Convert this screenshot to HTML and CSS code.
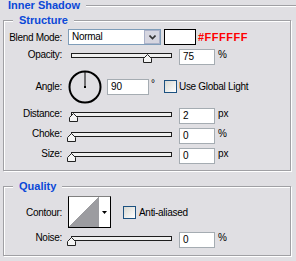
FILE: index.html
```html
<!DOCTYPE html>
<html>
<head>
<meta charset="utf-8">
<link rel="stylesheet" href="styles.css">
</head>
<body>
<div class="panel">
  <div class="head"><span class="title">Inner Shadow</span><span class="rule"></span></div>

  <fieldset class="group structure">
    <legend class="legend">Structure</legend>
    <div class="rows">
      <div class="row">
        <span class="lbl">Blend Mode:</span>
        <div class="select">
          <span class="select-text">Normal</span>
          <span class="select-btn"><svg class="chev" width="7" height="5" viewBox="0 0 7 5"><polyline points="0.5,0.5 3.5,3.5 6.5,0.5" fill="none" stroke="#333" stroke-width="1.6"/></svg></span>
        </div>
        <span class="swatch"></span>
        <span class="hex">#FFFFFF</span>
      </div>

      <div class="row row-slider">
        <span class="lbl">Opacity:</span>
        <div class="slider">
          <div class="track"></div>
          <svg class="thumb" style="left:75px" width="9" height="9" viewBox="0 0 9 9"><polygon points="4.5,0.5 8.5,4.5 8.5,8.5 0.5,8.5 0.5,4.5" fill="#f4f4f4" stroke="#222" stroke-width="1"/></svg>
        </div>
        <span class="field">75</span>
        <span class="unit">%</span>
      </div>

      <div class="row row-angle">
        <span class="lbl">Angle:</span>
        <svg class="dial" width="34" height="34" viewBox="0 0 34 34">
          <circle cx="17" cy="17" r="15.5" fill="none" stroke="#000" stroke-width="2"/>
          <line x1="17" y1="2" x2="17" y2="17" stroke="#000" stroke-width="1"/>
          <rect x="16" y="16" width="2" height="2" fill="#000"/>
        </svg>
        <span class="field field-wide">90</span>
        <span class="unit unit-deg">°</span>
        <span class="check"></span>
        <span class="check-text">Use Global Light</span>
      </div>

      <div class="row row-slider">
        <span class="lbl">Distance:</span>
        <div class="slider">
          <div class="track"></div>
          <svg class="thumb" style="left:1px" width="9" height="9" viewBox="0 0 9 9"><polygon points="4.5,0.5 8.5,4.5 8.5,8.5 0.5,8.5 0.5,4.5" fill="#f4f4f4" stroke="#222" stroke-width="1"/></svg>
        </div>
        <span class="field">2</span>
        <span class="unit">px</span>
      </div>

      <div class="row row-slider">
        <span class="lbl">Choke:</span>
        <div class="slider">
          <div class="track"></div>
          <svg class="thumb" style="left:-1px" width="9" height="9" viewBox="0 0 9 9"><polygon points="4.5,0.5 8.5,4.5 8.5,8.5 0.5,8.5 0.5,4.5" fill="#f4f4f4" stroke="#222" stroke-width="1"/></svg>
        </div>
        <span class="field">0</span>
        <span class="unit">%</span>
      </div>

      <div class="row row-slider">
        <span class="lbl">Size:</span>
        <div class="slider">
          <div class="track"></div>
          <svg class="thumb" style="left:-1px" width="9" height="9" viewBox="0 0 9 9"><polygon points="4.5,0.5 8.5,4.5 8.5,8.5 0.5,8.5 0.5,4.5" fill="#f4f4f4" stroke="#222" stroke-width="1"/></svg>
        </div>
        <span class="field">0</span>
        <span class="unit">px</span>
      </div>
    </div>
  </fieldset>

  <fieldset class="group quality">
    <legend class="legend">Quality</legend>
    <div class="rows">
      <div class="row row-contour">
        <span class="lbl">Contour:</span>
        <div class="contour">
          <span class="contour-preview"></span>
          <span class="contour-drop"><svg width="5" height="3" viewBox="0 0 5 3"><polygon points="0,0 5,0 2.5,3" fill="#000"/></svg></span>
        </div>
        <span class="check check-aa"></span>
        <span class="check-text check-text-aa">Anti-aliased</span>
      </div>

      <div class="row row-slider">
        <span class="lbl">Noise:</span>
        <div class="slider">
          <div class="track"></div>
          <svg class="thumb" style="left:-1px" width="9" height="9" viewBox="0 0 9 9"><polygon points="4.5,0.5 8.5,4.5 8.5,8.5 0.5,8.5 0.5,4.5" fill="#f4f4f4" stroke="#222" stroke-width="1"/></svg>
        </div>
        <span class="field">0</span>
        <span class="unit">%</span>
      </div>
    </div>
  </fieldset>
</div>
</body>
</html>
```

FILE: styles.css
```css
html, body {
  margin: 0;
  padding: 0;
  background: #e0dfe3;
}

body {
  width: 296px;
  height: 261px;
  overflow: hidden;
  font-family: "Liberation Sans", Arial, sans-serif;
  font-size: 10px;
  color: #000;
}

.panel {
  padding-left: 3px;
}

.head {
  display: flex;
  height: 11px;
  padding-left: 5px;
}

.title {
  font-weight: bold;
  font-size: 11px;
  line-height: 11px;
  color: #0a48d8;
  white-space: nowrap;
}

.rule {
  flex: 1;
  height: 0;
  margin: 5px 0 0 6px;
  border-top: 1px solid #a0a0a4;
  border-bottom: 1px solid #fff;
}

.group {
  margin: 3px 0 0;
  padding: 2px 0 6px;
  width: 288px;
  min-inline-size: 0;
  box-sizing: border-box;
  border: 1px solid #a0a0a4;
  box-shadow: inset 1px 1px 0 #fff, 1px 1px 0 #fff;
}

.quality {
  margin-top: 9px;
  padding: 3px 0 7px;
}

.legend {
  margin-left: 9px;
  padding: 0 6px;
  font-weight: bold;
  font-size: 11px;
  line-height: 13px;
  color: #0a48d8;
  background: #e0dfe3;
}

.rows {
  display: flex;
  flex-direction: column;
  gap: 4px;
}

.row {
  display: flex;
  align-items: center;
  height: 16px;
}

.row-slider {
  align-items: flex-start;
}

.row-angle {
  height: 35px;
}

.row-contour {
  height: 32px;
}

.lbl {
  flex: none;
  width: 58px;
  margin-right: 6px;
  text-align: right;
  letter-spacing: -0.3px;
  white-space: nowrap;
}

.row-slider .lbl {
  line-height: 12px;
}

/* select */
.select {
  flex: none;
  display: flex;
  align-items: center;
  width: 93px;
  height: 16px;
  box-sizing: border-box;
  border: 1px solid #7f9db9;
  background: #fff;
}

.select-text {
  flex: 1;
  padding-left: 3px;
  line-height: 14px;
  letter-spacing: -0.3px;
}

.select-btn {
  display: flex;
  align-items: center;
  justify-content: center;
  width: 16px;
  height: 14px;
  box-sizing: border-box;
  border: 1px solid #aab1c8;
  background: #d6d6e0;
}

.swatch {
  flex: none;
  width: 32px;
  height: 16px;
  box-sizing: border-box;
  margin-left: 3px;
  border: 1px solid #000;
  background: #fff;
}

.hex {
  margin-left: 2px;
  color: #f00;
  font-weight: bold;
  font-size: 11px;
  letter-spacing: 0.5px;
  white-space: nowrap;
}

/* slider */
.slider {
  position: relative;
  flex: none;
  width: 104px;
  height: 16px;
  margin-right: 7px;
}

.track {
  width: 101px;
  height: 5px;
  margin: 4px 0 0 3px;
  box-sizing: border-box;
  border: 1px solid #1e1e1e;
  background: #f0f0f0;
}

.thumb {
  position: absolute;
  top: 5px;
}

/* fields */
.field {
  flex: none;
  width: 36px;
  height: 16px;
  box-sizing: border-box;
  padding-left: 3px;
  border: 1px solid #a5acb2;
  background: #fff;
  line-height: 14px;
}

.field-wide {
  width: 42px;
}

.unit {
  align-self: flex-start;
  margin-left: 3px;
  line-height: 12px;
}

.unit-deg {
  width: 13px;
  margin-left: 2px;
  margin-top: 9px;
}

.dial {
  flex: none;
  margin-right: 5px;
}

.check {
  flex: none;
  width: 13px;
  height: 13px;
  box-sizing: border-box;
  border: 1px solid #1c5180;
  background: linear-gradient(135deg, #d8d8d2, #fff);
}

.check-text {
  margin-left: 2px;
  letter-spacing: -0.3px;
  white-space: nowrap;
}

.check-aa {
  margin-left: 12px;
}

.check-text-aa {
  margin-left: 3px;
}

/* contour */
.contour {
  flex: none;
  display: flex;
  width: 43px;
  height: 32px;
  box-sizing: border-box;
  border: 1px solid #000;
  border-top-color: #808080;
}

.contour-preview {
  width: 30px;
  height: 30px;
  background: linear-gradient(to bottom right, #fff 50%, #9c9ca0 50%);
}

.contour-drop {
  flex: 1;
  display: flex;
  align-items: center;
  justify-content: center;
  background: #fff;
}
```
